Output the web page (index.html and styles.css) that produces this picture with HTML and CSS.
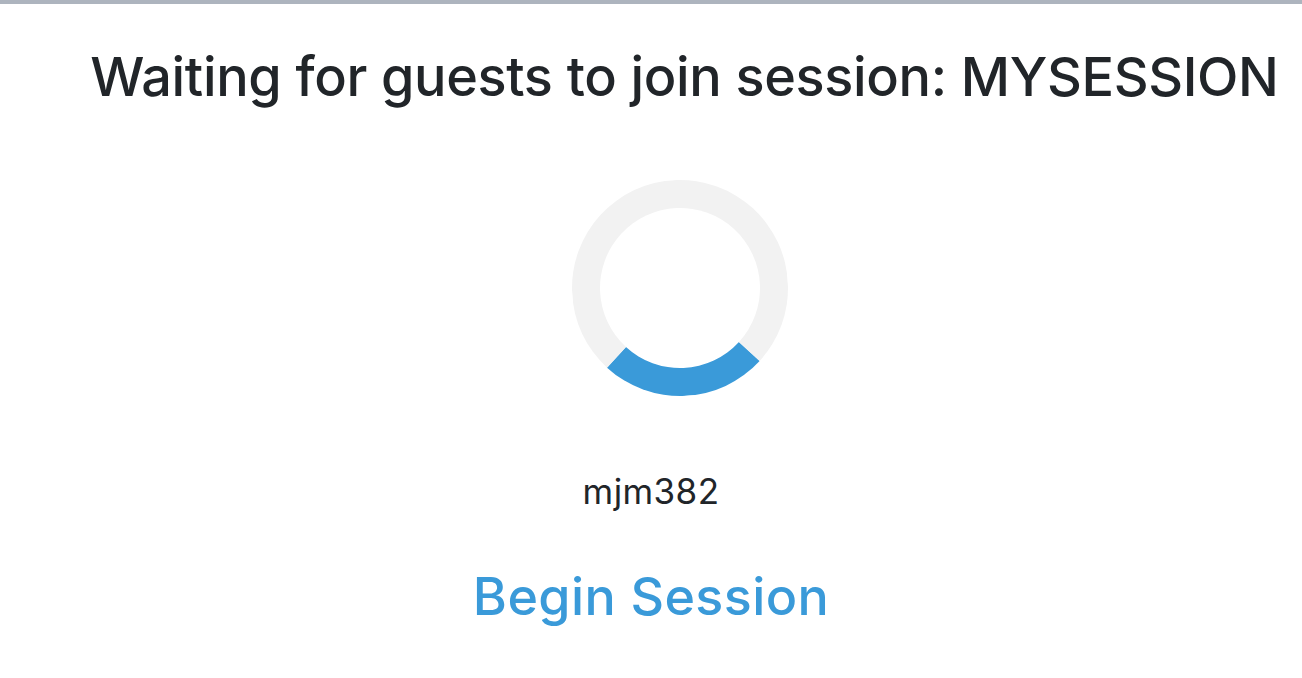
FILE: index.html
```html
<!DOCTYPE html>
<html lang="en">
<head>
<meta charset="utf-8">
<title>Waiting for guests</title>
<link rel="stylesheet" href="styles.css">
</head>
<body>
<div class="topbar"></div>
<main class="page">
  <section class="waiting">
    <h1 class="title">Waiting for guests to join session: MYSESSION</h1>
    <div class="loader"></div>
  </section>
  <section class="guests">
    <p class="guest">mjm382</p>
    <a class="begin" href="#">Begin Session</a>
  </section>
</main>
</body>
</html>
```

FILE: styles.css
```css
* { box-sizing: border-box; }
html, body { margin: 0; padding: 0; background: #ffffff; }
body {
  font-family: Inter, "Noto Sans", "Liberation Sans", sans-serif;
  color: #212529;
  width: 1302px;
  height: 678px;
  overflow: hidden;
}
.topbar {
  height: 4px;
  background: #adb4be;
}
.page {
  display: flex;
  flex-direction: column;
}
.waiting {
  display: flex;
  flex-direction: column;
  align-items: center;
  padding-left: 58px;
}
.title {
  margin: 40px 0 0 9px;
  font-size: 54px;
  font-weight: 500;
  line-height: 66px;
  letter-spacing: -0.35px;
  white-space: nowrap;
}
.loader {
  margin-top: 70px;
  width: 216px;
  height: 216px;
  border-radius: 50%;
  border: 28px solid #f2f2f2;
  border-bottom-color: #3a9ad9;
  transform: rotate(-2.5deg);
}
.guests {
  display: flex;
  flex-direction: column;
  align-items: center;
}
.guest {
  margin: 75px 0 0 0;
  font-size: 35px;
  line-height: 40px;
  letter-spacing: 0.4px;
}
.begin {
  margin-top: 55px;
  font-size: 52px;
  font-weight: 500;
  line-height: 62px;
  letter-spacing: 0.4px;
  color: #3a9ad9;
  text-decoration: none;
}
```
